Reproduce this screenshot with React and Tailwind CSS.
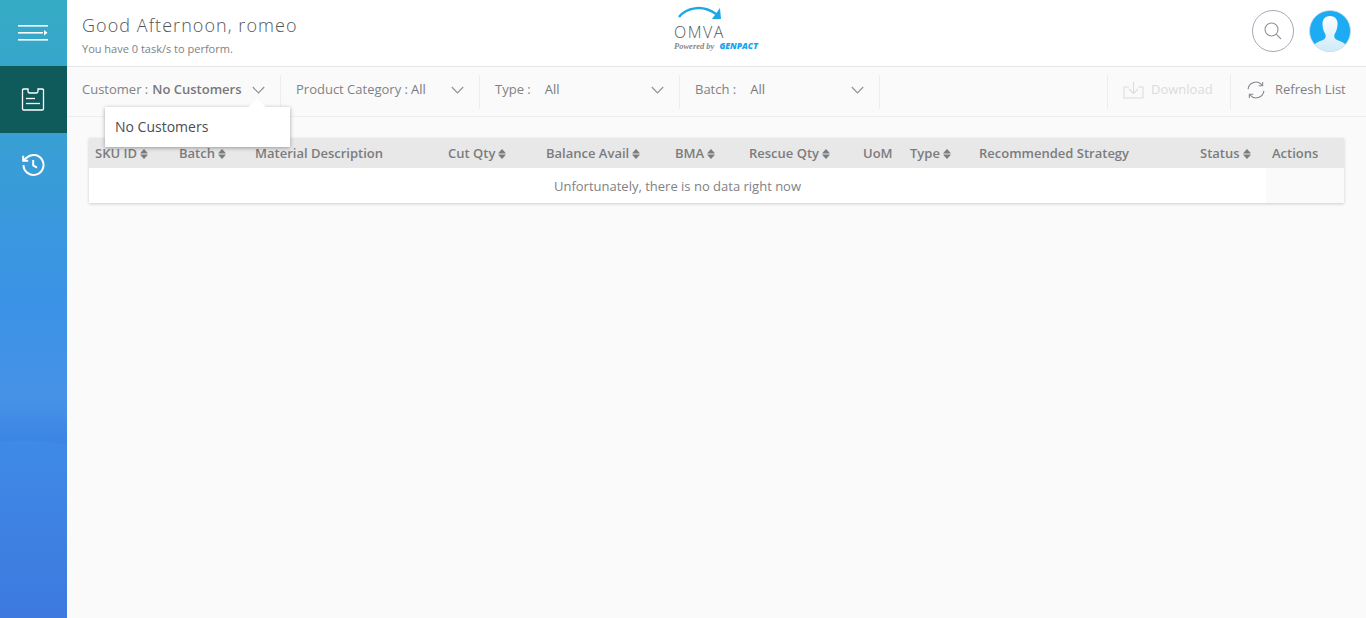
import React from "react";

const font = "font-['Open_Sans',sans-serif]";

// up/down sort carets next to a column title
const SortIcon = () => (
  <svg width="8" height="12" viewBox="0 0 9 12" className="ml-[3px] shrink-0" fill="#7b7c7e">
    <path d="M4.5 0.5 L8.6 4.8 Q8.8 5.4 8.2 5.4 L0.8 5.4 Q0.2 5.4 0.4 4.8 Z" />
    <path d="M4.5 11.5 L8.6 7.2 Q8.8 6.6 8.2 6.6 L0.8 6.6 Q0.2 6.6 0.4 7.2 Z" />
  </svg>
);

const Chevron = () => (
  <svg width="13" height="8" viewBox="0 0 13 8" fill="none" stroke="#8e9093" strokeWidth="1.1">
    <path d="M0.8 1 L6.5 7 L12.2 1" />
  </svg>
);

const columns = [
  { title: "SKU ID", w: "w-[84px]", sort: true },
  { title: "Batch", w: "w-[76px]", sort: true },
  { title: "Material Description", w: "w-[193px]" },
  { title: "Cut Qty", w: "w-[98px]", sort: true },
  { title: "Balance Avail", w: "w-[129px]", sort: true },
  { title: "BMA", w: "w-[74px]", sort: true },
  { title: "Rescue Qty", w: "w-[114px]", sort: true },
  { title: "UoM", w: "w-[47px]" },
  { title: "Type", w: "w-[69px]", sort: true },
  { title: "Recommended Strategy", w: "w-[221px]" },
  { title: "Status", w: "w-[72px]", sort: true },
  { title: "Actions", w: "w-[66px]" },
];

const Sidebar = () => (
  <aside className="relative w-[67px] shrink-0 overflow-hidden bg-[linear-gradient(to_bottom,#35abc4_0px,#3b92e6_300px,#4792e8_400px,#3c85e2_440px)]">
    <svg className="absolute bottom-0 left-0" width="67" height="178" viewBox="0 0 67 178">
      <defs>
        <linearGradient id="wave" x1="0" y1="0" x2="0" y2="1">
          <stop offset="0" stopColor="#3f8ae6" />
          <stop offset="1" stopColor="#3d79df" />
        </linearGradient>
      </defs>
      <path d="M0 2 Q30 -2 67 5 L67 178 L0 178 Z" fill="url(#wave)" />
    </svg>
    <div className="relative flex h-[66px] items-center justify-center pr-[1px]">
      <svg width="30" height="16" viewBox="0 0 30 16" fill="#fff">
        <rect x="0" y="0" width="30" height="1.6" />
        <rect x="0" y="7" width="25" height="1.6" />
        <path d="M26 5 L29.5 7.8 L26 10.6 Z" />
        <rect x="0" y="14" width="30" height="1.6" />
      </svg>
    </div>
    <div className="relative flex h-[67px] items-center justify-center bg-[#0f5b5b] pr-[1px]">
      <svg width="24" height="24" viewBox="0 0 24 24" fill="none" stroke="#fff" strokeWidth="1.3">
        <path d="M7 1 H2.8 Q1.5 1 1.5 2.3 V20.7 Q1.5 22 2.8 22 H21.2 Q22.5 22 22.5 20.7 V2.3 Q22.5 1 21.2 1 H17 V3.3 Q17 5 15.3 5 H8.7 Q7 5 7 3.3 Z" />
        <path d="M5 10.5 H14" />
        <path d="M5 15.5 H19" />
      </svg>
    </div>
    <div className="relative flex h-[66px] items-center justify-center pb-[2px] pr-[1px]">
      <svg width="24" height="24" viewBox="0 0 24 24" fill="none" stroke="#fff" strokeWidth="2">
        <path d="M2.5 12 A10 10 0 1 0 5.5 4.8 L2.5 7.6" />
        <path d="M2.2 2.8 V7.8 H7.2" />
        <path d="M12.2 7 V12.5 L16 14.6" />
      </svg>
    </div>
  </aside>
);

const Logo = () => (
  <div className="relative h-[56px] w-[90px] self-start">
    <svg className="absolute left-[4px] top-[5px]" width="46" height="16" viewBox="0 0 46 16" fill="none">
      <path d="M1 12 C8 3 24 -1 38 9" stroke="#1ea7e6" strokeWidth="2.5" />
      <path d="M34 14 L43 14 L42 3 Z" fill="#1ea7e6" />
    </svg>
    <span className="absolute left-0 top-[22px] text-[16px] font-light leading-[20px] tracking-[1.5px] text-[#55565a]">OMVA</span>
    <span className="absolute left-0 top-[41px] flex items-center whitespace-nowrap text-[8.5px] leading-[10px] italic">
      <span className="font-['Liberation_Serif',serif] font-bold text-[#8a8a8a]">Powered by</span>
      <span className="ml-[5px] text-[8.5px] font-extrabold text-[#14a5ee]">GENPACT</span>
    </span>
  </div>
);

const Header = () => (
  <header className="flex h-[67px] shrink-0 items-center border-b border-[#e6e6e6] bg-white pl-[15px] pr-[15px]">
    <div className="w-[592px] pt-[2px]">
      <div className="text-[18px] font-light leading-[24px] tracking-[1.05px] text-[#55565a]">Good Afternoon, romeo</div>
      <div className="mt-[4px] text-[11px] leading-[15px] text-[#808285]">You have 0 task/s to perform.</div>
    </div>
    <Logo />
    <div className="mb-[4px] ml-auto flex items-center gap-[15px]">
      <div className="flex h-[42px] w-[42px] items-center justify-center rounded-full border border-[#a4abb5]">
        <svg width="20" height="20" viewBox="0 0 20 20" fill="none" stroke="#8f949b" strokeWidth="1.1">
          <circle cx="8.5" cy="8.5" r="6.5" />
          <path d="M13.2 13.2 L18 18" />
        </svg>
      </div>
      <svg width="42" height="42" viewBox="0 0 42 42">
        <defs>
          <clipPath id="av">
            <circle cx="21" cy="21" r="20.5" />
          </clipPath>
          <linearGradient id="bust" x1="0" y1="0" x2="0" y2="1">
            <stop offset="0" stopColor="#fbfeff" />
            <stop offset="1" stopColor="#cfeaf9" />
          </linearGradient>
        </defs>
        <circle cx="21" cy="21" r="20.5" fill="#1cacf3" stroke="#cfd8de" strokeWidth="0.8" />
        <g clipPath="url(#av)">
          <path
            d="M21 6 C15.5 6 13 10 13.5 15 C13.7 18 14.5 21 16 23.5 C17 25 17 27.5 15.5 29 C12.5 31 6.5 32 4.5 36 L4.5 42 L37.5 42 L37.5 36 C35.5 32 29.5 31 26.5 29 C25 27.5 25 25 26 23.5 C27.5 21 28.3 18 28.5 15 C29 10 26.5 6 21 6 Z"
            fill="url(#bust)"
          />
        </g>
      </svg>
    </div>
  </header>
);

const Filter = ({ label, value, w, gap, weight }) => (
  <div className={`flex h-[34px] items-center border-r border-[#ededed] pl-[15px] text-[13px] text-[#808285] ${w}`}>
    <span className={`mb-[3px] whitespace-nowrap ${gap}`}>{label}</span>
    <span className={`mb-[3px] whitespace-nowrap text-[#77787a] ${weight}`}>{value}</span>
    <span className="mb-[3px] ml-auto mr-[15px] flex">
      <Chevron />
    </span>
  </div>
);

const FilterBar = () => (
  <div className="relative flex h-[50px] shrink-0 items-center border-b border-[#eeeeee] bg-[#fafafa]">
    <Filter label="Customer :" value="No Customers" w="w-[214px]" gap="mr-[4px]" weight="font-semibold" />
    <Filter label="Product Category :" value="All" w="w-[199px]" gap="mr-[3px]" weight="font-medium" />
    <Filter label="Type :" value="All" w="w-[200px]" gap="mr-[14px]" weight="font-medium" />
    <Filter label="Batch :" value="All" w="w-[200px]" gap="mr-[14px]" weight="font-medium" />
    <div className="ml-auto flex h-[34px] items-center">
      <div className="flex h-full w-[124px] items-center border-x border-[#ededed] pb-[3px] pl-[15px] text-[13px] text-[#dcdcdc]">
        <svg width="21" height="18" viewBox="0 0 21 18" fill="none" stroke="#dcdcdc" strokeWidth="1.1" className="mr-[7px]">
          <path d="M6 6 H1 V17 H20 V6 H15" />
          <path d="M10.5 1 V12" />
          <path d="M6 8 L10.5 12.5 L15 8" />
        </svg>
        Download
      </div>
      <div className="flex h-full w-[135px] items-center pb-[3px] pl-[16px] text-[13px] text-[#808285]">
        <svg width="18" height="18" viewBox="0 0 20 20" fill="none" stroke="#85888c" strokeWidth="1.2" className="mr-[10px]">
          <path d="M1.2 9 A8.8 8.8 0 0 1 16.5 4.2" />
          <path d="M17.4 1 V5.2 H13" />
          <path d="M18.8 11 A8.8 8.8 0 0 1 3.5 15.8" />
          <path d="M2.6 19 V14.8 H7" />
        </svg>
        Refresh List
      </div>
    </div>
    {/* customer dropdown, hangs over the table */}
    <div className="absolute left-[38px] top-[40px] z-10 h-[40px] w-[185px] bg-white pl-[10px] text-[14px] leading-[40px] text-[#4c4d50] shadow-[0_1px_4px_rgba(0,0,0,0.35)]">
      <span className="absolute left-[146px] top-[-6px] h-[12px] w-[12px] rotate-45 bg-white" />
      <span className="relative">No Customers</span>
    </div>
  </div>
);

const DataTable = () => (
  <div className="ml-[22px] mt-[21px] w-[1255px] bg-white shadow-[0_1px_3px_rgba(0,0,0,0.18)]">
    <div className="flex h-[30px] items-center bg-[#e8e8e8] pl-[6px] pt-[2px] text-[13px] font-semibold text-[#7b7c7e]">
      {columns.map((c) => (
        <div key={c.title} className={`flex shrink-0 items-center whitespace-nowrap ${c.w}`}>
          {c.title}
          {c.sort && <SortIcon />}
        </div>
      ))}
    </div>
    <div className="flex h-[35px]">
      <div className="flex w-[1177px] items-center justify-center pt-[2px] text-[13px] text-[#808285]">
        Unfortunately, there is no data right now
      </div>
      <div className="flex-1 bg-[#fafafa]" />
    </div>
  </div>
);

export default function App() {
  return (
    <div className={`flex h-[618px] w-[1366px] overflow-hidden bg-[#fafafa] ${font}`}>
      <Sidebar />
      <main className="flex min-w-0 flex-1 flex-col">
        <Header />
        <FilterBar />
        <DataTable />
      </main>
    </div>
  );
}
